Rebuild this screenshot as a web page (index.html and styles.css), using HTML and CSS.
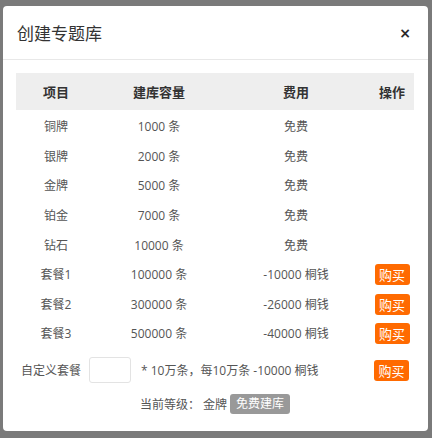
FILE: index.html
```html
<!DOCTYPE html>
<html lang="zh-CN">
<head>
<meta charset="utf-8">
<title>创建专题库</title>
<link rel="stylesheet" href="styles.css">
</head>
<body>
<div class="backdrop">
  <div class="modal">
    <div class="modal-header">
      <h4 class="modal-title">创建专题库</h4>
      <span class="close">&times;</span>
    </div>
    <div class="modal-body">
      <table class="plans">
        <colgroup>
          <col class="c1"><col class="c2"><col class="c3"><col class="c4">
        </colgroup>
        <thead>
          <tr><th>项目</th><th>建库容量</th><th>费用</th><th>操作</th></tr>
        </thead>
        <tbody>
          <tr><td>铜牌</td><td>1000 条</td><td>免费</td><td></td></tr>
          <tr><td>银牌</td><td>2000 条</td><td>免费</td><td></td></tr>
          <tr><td>金牌</td><td>5000 条</td><td>免费</td><td></td></tr>
          <tr><td>铂金</td><td>7000 条</td><td>免费</td><td></td></tr>
          <tr><td>钻石</td><td>10000 条</td><td>免费</td><td></td></tr>
          <tr><td>套餐1</td><td>100000 条</td><td>-10000 桐钱</td><td><button class="buy">购买</button></td></tr>
          <tr><td>套餐2</td><td>300000 条</td><td>-26000 桐钱</td><td><button class="buy">购买</button></td></tr>
          <tr><td>套餐3</td><td>500000 条</td><td>-40000 桐钱</td><td><button class="buy">购买</button></td></tr>
        </tbody>
      </table>
      <div class="custom">
        <span class="custom-label">自定义套餐</span>
        <input class="custom-input" type="text">
        <span class="custom-note">* 10万条，每10万条 -10000 桐钱</span>
        <button class="buy custom-buy">购买</button>
      </div>
      <div class="level">
        <span>当前等级： 金牌</span>
        <span class="badge">免费建库</span>
      </div>
    </div>
  </div>
</div>
</body>
</html>
```
FILE: styles.css
```css
html, body {
  margin: 0;
  padding: 0;
  height: 100%;
}
body {
  background: #7a7a7a;
  font-family: "Open Sans", "Noto Sans CJK SC", sans-serif;
  font-size: 12px;
  color: #555;
}
.backdrop {
  padding: 6px 4px 0 3px;
}
.modal {
  width: 425px;
  height: 425px;
  background: #fff;
  border-radius: 4px;
  box-sizing: border-box;
}
.modal-header {
  height: 54px;
  box-sizing: border-box;
  border-bottom: 1px solid #e8e8e8;
  display: flex;
  align-items: center;
  justify-content: space-between;
  padding: 0 17px 0 14px;
}
.modal-title {
  margin: 0;
  font-family: "Noto Sans CJK SC", sans-serif;
  font-weight: normal;
  font-size: 17px;
  color: #333;
  line-height: 20px;
}
.close {
  font-family: "DejaVu Sans", sans-serif;
  font-size: 14px;
  font-weight: bold;
  color: #2a2a2a;
  line-height: 16px;
}
.modal-body {
  padding: 13px 14px 0 13px;
}
.plans {
  width: 398px;
  border-collapse: collapse;
  table-layout: fixed;
}
.c1 { width: 80px; }
.c2 { width: 126px; }
.c3 { width: 148px; }
.c4 { width: 44px; }
.plans th {
  background: #eeeeee;
  height: 37px;
  padding: 0;
  font-size: 13px;
  font-weight: bold;
  color: #333;
  text-align: center;
  vertical-align: middle;
}
.plans td {
  height: 29.6px;
  padding: 0;
  text-align: center;
  vertical-align: middle;
  line-height: 17px;
}
.plans tbody tr:first-child td {
  padding-top: 2px;
}
.buy {
  width: 35px;
  height: 21px;
  padding: 0;
  border: none;
  border-radius: 3px;
  background: #ff6a00;
  color: #fff;
  font-family: "Noto Sans CJK SC", sans-serif;
  font-size: 13px;
  line-height: 21px;
  cursor: pointer;
}
.custom {
  display: flex;
  align-items: center;
  height: 26px;
  margin-top: 8px;
  padding-left: 5px;
}
.custom-label {
  width: 68px;
}
.custom-input {
  width: 42px;
  height: 26px;
  box-sizing: border-box;
  border: 1px solid #e3e3e3;
  border-radius: 3px;
  margin: 0 10px 0 0;
  padding: 0;
}
.custom-note {
  flex: 1;
}
.custom-buy {
  margin-right: 5px;
  margin-top: 2px;
}
.level {
  display: flex;
  justify-content: center;
  align-items: center;
  gap: 3px;
  margin-top: 11px;
}
.badge {
  background: #999;
  color: #fff;
  border-radius: 3px;
  height: 20px;
  line-height: 20px;
  padding: 0 6px;
  font-size: 12px;
}
```
